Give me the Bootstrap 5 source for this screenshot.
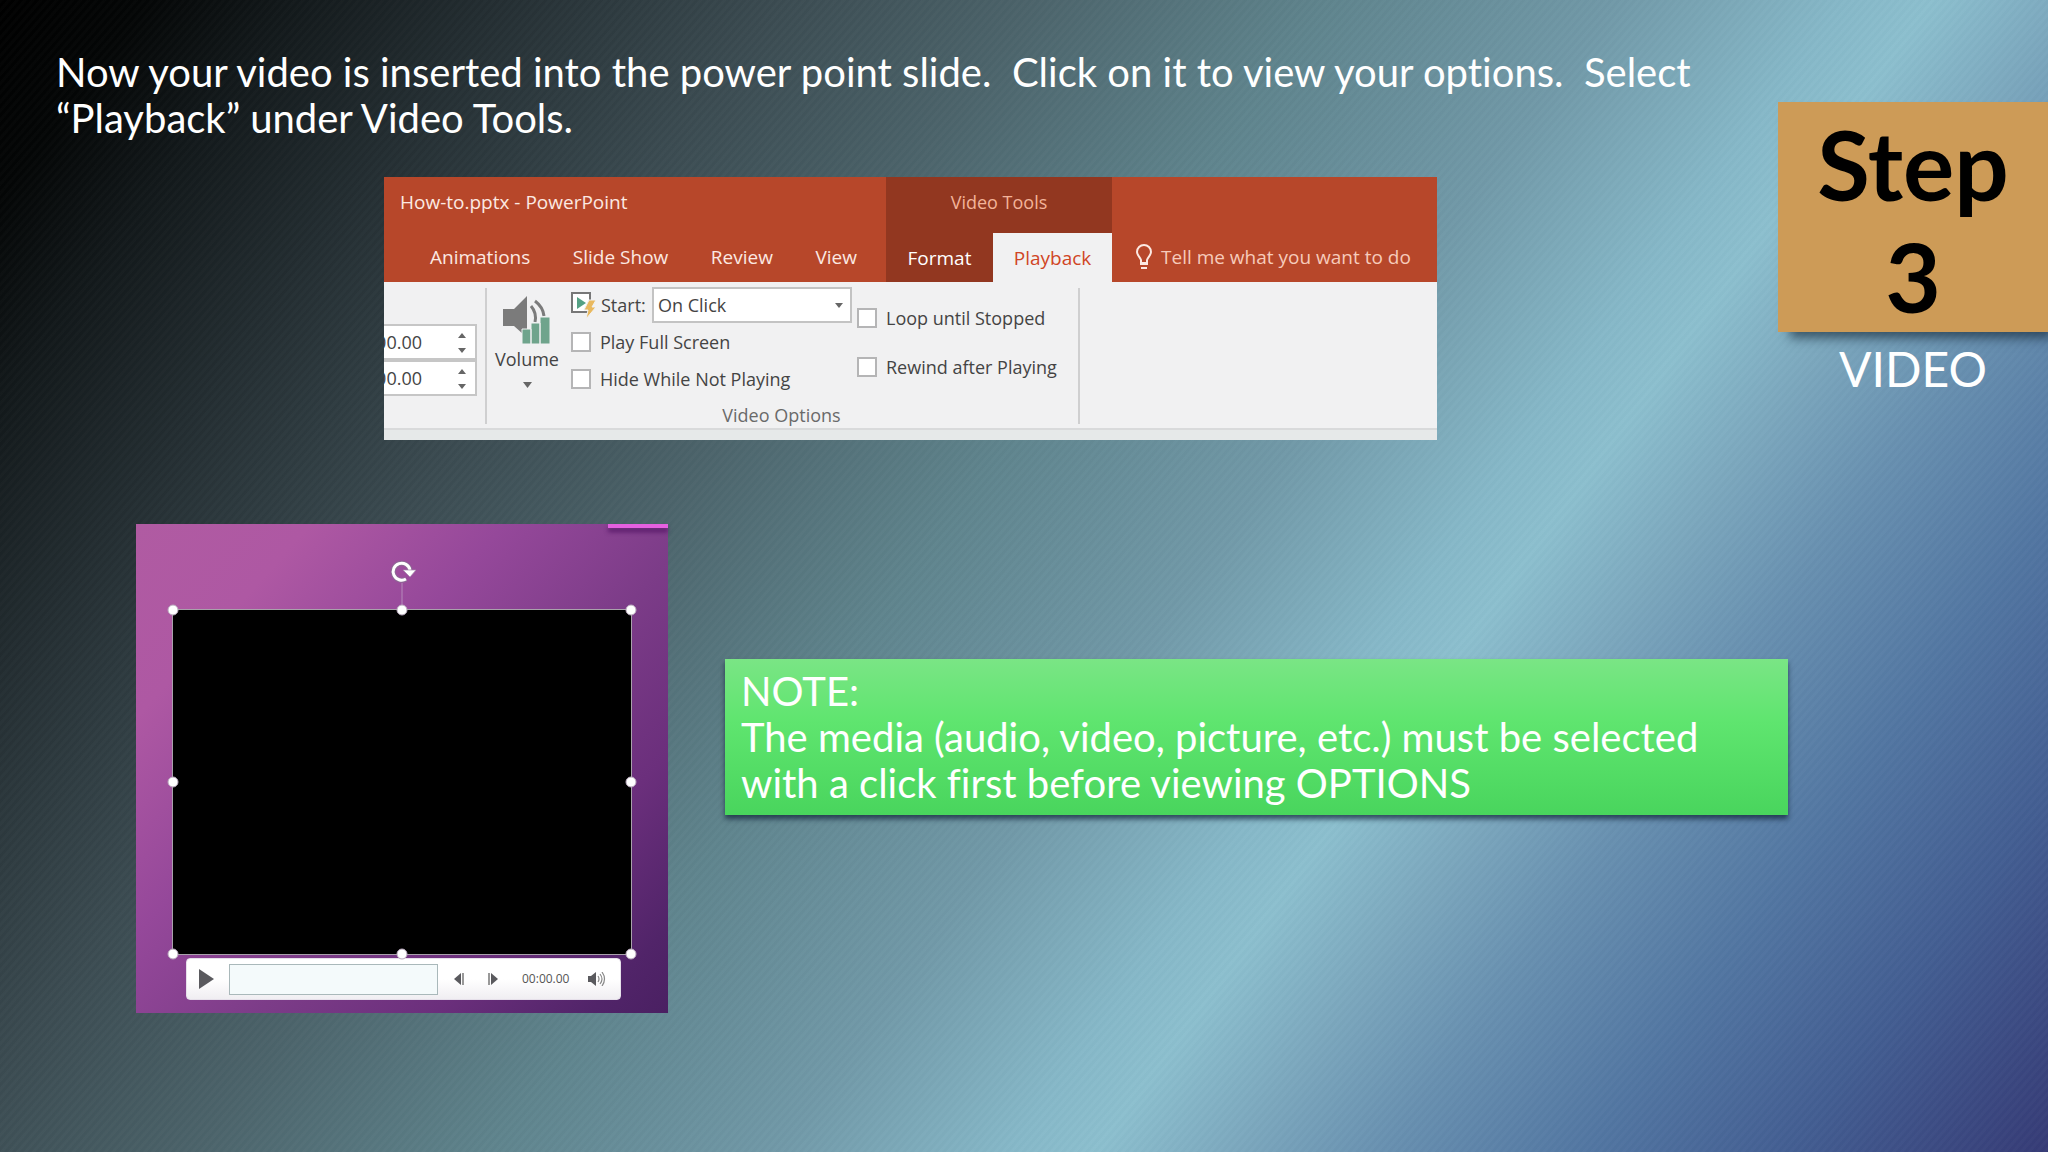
<!DOCTYPE html>
<html lang="en">
<head>
<meta charset="utf-8">
<meta name="viewport" content="width=device-width, initial-scale=1">
<title>Step 3 - Video</title>
<link href="https://cdn.jsdelivr.net/npm/bootstrap@5.3.0/dist/css/bootstrap.min.css" rel="stylesheet">
<style>
  body { font-family: Lato, "Open Sans", sans-serif; color: #fff; font-variant-ligatures: none; }
  .slide {
    background:
      repeating-linear-gradient(131deg, rgba(255,255,255,.014) 0 2px, rgba(0,0,0,.012) 3px 5px, rgba(255,255,255,.014) 6px),
      linear-gradient(126deg, #000 0%, #040606 5%, #12181a 10%, #232d31 17%, #3b4b51 27%, #4c646b 36%, #5f848d 46%, #7199a8 56%, #86b8c8 64%, #8cbfce 67%, #7ba7bd 72%, #6890b0 77%, #5276a2 84%, #435e92 91%, #363b76 100%);
  }
  .intro { font-size: 40px; line-height: 46px; padding: 49px 40px 36px 56px; white-space: pre-wrap; }
  .side-col { flex: 0 0 270px; padding-top: 102px; }
  .step-box { background: #cd9b57; color: #000; font-size: 96px; line-height: 112px; font-weight: 700; padding: 6px 30px 0; box-shadow: 8px 10px 10px -4px rgba(20,40,55,.65); }
  .step-kind { font-size: 48px; line-height: 60px; margin-top: 7px; }

  /* ribbon */
  .ribbon { font-family: "Open Sans", "Noto Sans", sans-serif; font-size: 19px; line-height: 26px; margin-left: 384px; max-width: 1053px; color: #444; background: #f1f1f2; }
  .ribbon-head { background: #b7472a; color: #fce9e2; }
  .ribbon-head a { color: inherit; text-decoration: none; }
  .head-title { height: 56px; padding-top: 12px; }
  .head-tabs { height: 49px; padding-bottom: 1px; }
  .head-main { flex: 0 0 502px; }
  .head-main .head-title { padding-left: 16px; }
  .head-main .head-tabs { padding: 0 29px 1px 46px; }
  .head-context { flex: 0 0 226px; background: #923720; }
  .head-context .head-title { color: #f3b399; font-size: 18px; }
  .head-context .head-tabs { padding: 0; }
  .head-context .head-tabs a { flex: 0 0 107px; color: #fff; }
  .head-context .head-tabs a.current { flex: 1 1 0; background: #f1f1f2; color: #d04525; }
  .tell { padding-left: 23px; color: #f6cbbb; }
  .ribbon-body { height: 148px; border-bottom: 2px solid #d9dadb; font-size: 18px; }
  .ribbon-foot { height: 10px; background: #e6e9e9; }
  .spins { flex: 0 0 93px; width: 93px; min-width: 0; padding-top: 42px; overflow: hidden; }
  .spin-box { height: 36px; background: #fff; border: 2px solid #c6c6c6; border-left: 0; overflow: hidden; }
  .spin-box input { flex: 0 0 84px; width: 84px; border: 0; padding: 0; background: none; color: #444; line-height: 30px; text-align: right; }
  .spin-box .steps { flex: 0 0 53px; }
  .rule { flex: 0 0 2px; height: 136px; margin-top: 6px; background: #cfcfd0; }
  .vol { flex: 0 0 80px; border: 0; background: none; padding: 14px 0 0; color: #444; line-height: 30px; }
  .opts { flex: 0 0 286px; padding-top: 5px; }
  .opt-start { height: 36px; padding-right: 5px; }
  .opt-start label { flex: 0 0 51px; }
  .opt-start .form-select { height: 36px; border: 2px solid #c3c3c3; border-radius: 0; padding: 0 24px 0 4px; font-size: 18px; line-height: 30px; color: #444;
    background: #fff url("data:image/svg+xml,%3Csvg xmlns='http://www.w3.org/2000/svg' viewBox='0 0 8 5'%3E%3Cpath fill='%23666' d='M0 0h8L4 5z'/%3E%3C/svg%3E") no-repeat right 7px center / 8px 5px; }
  .tick { height: 37px; gap: 9px; }
  .tick input { appearance: none; flex: 0 0 20px; width: 20px; height: 20px; margin: 0; background: #fff; border: 2px solid #b5b5b6; }
  .tick input:checked { background: #78a892; }
  .loops { flex: 0 0 205px; padding-top: 17px; }
  .loops .tick { margin-bottom: 12px; }
  .group-name { color: #6a6a6a; line-height: 24px; margin-top: 6px; padding-left: 14px; }

  /* lower part */
  .lower { padding: 84px 260px 139px 136px; gap: 57px; }
  .shot { flex: 0 0 532px; height: 489px; padding: 85px 36px 0 36px;
    background: linear-gradient(132deg, #b05ba2 0%, #ae58a3 18%, #95489a 38%, #7c3c88 58%, #6b2f7c 76%, #512469 92%, #4a2062 100%); }
  .shot-tab { top: 0; right: 0; width: 60px; height: 4px; background: #e560e0; box-shadow: 0 4px 4px rgba(70,10,90,.7); }
  .clip { height: 346px; background: #000; border: 1px solid #a9a2ab; }
  .knob { width: 11px; height: 11px; border-radius: 50%; background: #fff; border: 1px solid #b9a9bd; }
  .turn { left: 50%; top: -53px; width: 28px; height: 54px; transform: translateX(-50%); }
  .player { height: 42px; margin: 3px 11px 0 14px; background: linear-gradient(#fff 50%, #f0eef2); border-radius: 4px; padding: 0 14px 0 12px; border: 1px solid #e6e0ea; color: #555; font: 12px/16px "Open Sans", sans-serif; }
  .player button { border: 0; background: none; padding: 0; line-height: 0; color: #5a5a5e; }
  .track { flex: 0 0 209px; height: 31px; background: #f4fafb; border: 1px solid #a9b8ba; margin-left: 15px; }
  .note { background: linear-gradient(#7ae585, #5fe56f 40%, #49d55d); font-size: 40px; line-height: 46px; padding: 9px 40px 9px 16px; box-shadow: 0 4px 5px rgba(20,40,60,.75); margin-bottom: 64px; }
</style>
</head>
<body>
<main class="slide min-vh-100">
  <div class="d-flex">
    <div class="flex-grow-1">
      <p class="intro m-0">Now your video is inserted into the power point slide.  Click on it to view your options.  Select “Playback” under Video Tools.</p>

      <section class="ribbon" aria-label="PowerPoint ribbon">
        <div class="ribbon-head d-flex">
          <div class="head-main">
            <div class="head-title">How-to.pptx - PowerPoint</div>
            <nav class="head-tabs d-flex justify-content-between align-items-center">
              <a href="#">Animations</a><a href="#">Slide Show</a><a href="#">Review</a><a href="#">View</a>
            </nav>
          </div>
          <div class="head-context">
            <div class="head-title text-center">Video Tools</div>
            <nav class="head-tabs d-flex text-center">
              <a href="#" class="d-flex align-items-center justify-content-center">Format</a>
              <a href="#" class="current d-flex align-items-center justify-content-center">Playback</a>
            </nav>
          </div>
          <div class="flex-grow-1">
            <div class="head-title"></div>
            <div class="head-tabs tell d-flex align-items-center gap-2">
              <svg width="18" height="26" viewBox="0 0 18 26" fill="none" stroke="#fce9e2" stroke-width="2"><path d="M6 19v-3C5 13 2 11 2 8a7 7 0 0 1 14 0c0 3-3 5-4 8v3z"/><path d="M5 20h8M6 24h6"/></svg>
              <a href="#">Tell me what you want to do</a>
            </div>
          </div>
        </div>

        <div class="ribbon-body d-flex">
          <div class="spins">
            <div class="spin-box d-flex justify-content-end align-items-center">
              <input type="text" value="00:00.00" aria-label="Fade in">
              <svg class="steps" width="53" height="32" viewBox="0 0 53 32" fill="#666"><path d="M36 12h8l-4-5zM36 22h8l-4 5z"/></svg>
            </div>
            <div class="spin-box d-flex justify-content-end align-items-center">
              <input type="text" value="00:00.00" aria-label="Fade out">
              <svg class="steps" width="53" height="32" viewBox="0 0 53 32" fill="#666"><path d="M36 12h8l-4-5zM36 22h8l-4 5z"/></svg>
            </div>
          </div>
          <div class="rule ms-2"></div>
          <div class="d-flex flex-column">
            <div class="d-flex">
              <button type="button" class="vol d-flex flex-column align-items-center">
                <svg width="48" height="48" viewBox="0 0 48 48"><path fill="#7b7b7b" d="M0 13h11L24 0v38H20L11 30H0z"/><g fill="none" stroke="#7b7b7b" stroke-width="3"><path d="M28 10q6 7 4 16M32 5q8 6 9 15"/></g><g fill="#6fa48c" stroke="#f1f1f2"><path d="M19 33h9v15h-9zM28 27h9v21h-9zM37 21h10v27H37z"/></g></svg>
                <span>Volume</span>
                <svg class="mt-2" width="9" height="6" viewBox="0 0 9 6"><path fill="#666" d="M0 0h9L4.500 6z"/></svg>
              </button>
              <div class="opts ms-1">
                <div class="opt-start d-flex align-items-center">
                  <svg class="me-1 flex-shrink-0" width="26" height="28" viewBox="0 0 26 28"><path fill="#fff" stroke="#777" stroke-width="2" d="M1 2h18v19H1z"/><path fill="#55a184" d="M6 6l9 6-9 6z"/><path fill="#e9b95f" stroke="#f1f1f2" d="M18 9h7l-4 7h4L15 28l2-9h-4z"/></svg>
                  <label for="start">Start:</label>
                  <select id="start" class="form-select"><option>On Click</option><option>Automatically</option></select>
                </div>
                <div class="tick d-flex align-items-center"><input type="checkbox" id="full"><label for="full">Play Full Screen</label></div>
                <div class="tick d-flex align-items-center"><input type="checkbox" id="hide"><label for="hide">Hide While Not Playing</label></div>
              </div>
              <div class="loops">
                <div class="tick d-flex align-items-center"><input type="checkbox" id="loop"><label for="loop">Loop until Stopped</label></div>
                <div class="tick d-flex align-items-center"><input type="checkbox" id="rewind"><label for="rewind">Rewind after Playing</label></div>
              </div>
            </div>
            <div class="group-name text-center">Video Options</div>
          </div>
          <div class="rule ms-3"></div>
        </div>
        <div class="ribbon-foot"></div>
      </section>
    </div>

    <aside class="side-col text-center">
      <div class="step-box">Step 3</div>
      <div class="step-kind">VIDEO</div>
    </aside>
  </div>

  <div class="lower d-flex align-items-center">
    <figure class="shot position-relative m-0">
      <div class="shot-tab position-absolute"></div>
      <div class="clip position-relative">
        <svg class="turn position-absolute" viewBox="0 0 28 54" fill="none"><path stroke="#b58abb" d="M14 26v28"/><path stroke="#8d6a94" stroke-width="5" d="M18 22a8.500 8.500 0 1 1 4-9"/><path stroke="#fff" stroke-width="3" d="M18 22a8.500 8.500 0 1 1 4-9"/><path fill="#fff" stroke="#a588aa" stroke-width=".7" d="M15 13h13l-6 7z"/></svg>
        <span class="knob position-absolute top-0 start-0 translate-middle"></span>
        <span class="knob position-absolute top-0 start-50 translate-middle"></span>
        <span class="knob position-absolute top-0 start-100 translate-middle"></span>
        <span class="knob position-absolute top-50 start-0 translate-middle"></span>
        <span class="knob position-absolute top-50 start-100 translate-middle"></span>
        <span class="knob position-absolute top-100 start-0 translate-middle"></span>
        <span class="knob position-absolute top-100 start-50 translate-middle"></span>
        <span class="knob position-absolute top-100 start-100 translate-middle"></span>
      </div>
      <div class="player d-flex align-items-center">
        <button type="button" aria-label="Play"><svg width="15" height="20" viewBox="0 0 15 20"><path fill="currentColor" d="M0 0l15 10L0 20z"/></svg></button>
        <div class="track"></div>
        <button type="button" class="ms-3" aria-label="Back"><svg width="10" height="12" viewBox="0 0 10 12"><path fill="currentColor" d="M7 0v12L0 6z"/><path stroke="#999" stroke-width="2" d="M9 0v12"/></svg></button>
        <button type="button" class="ms-4" aria-label="Forward"><svg width="10" height="12" viewBox="0 0 10 12"><path fill="currentColor" d="M3 0v12l7-6z"/><path stroke="#999" stroke-width="2" d="M1 0v12"/></svg></button>
        <span class="ms-4">00:00.00</span>
        <button type="button" class="ms-auto" aria-label="Sound"><svg width="18" height="14" viewBox="0 0 18 14"><path fill="currentColor" d="M0 4h3l5-4v14l-5-4H0z"/><path fill="none" stroke="#888" stroke-width="1.200" d="M10 4q2 3 0 6M12 2q4 5 0 10M14 0q5 7 0 14"/></svg></button>
      </div>
    </figure>
    <div class="note flex-grow-1">NOTE:<br>The media (audio, video, picture, etc.) must be selected with a click first before viewing OPTIONS</div>
  </div>
</main>
<script src="https://cdn.jsdelivr.net/npm/bootstrap@5.3.0/dist/js/bootstrap.bundle.min.js"></script>
</body>
</html>
